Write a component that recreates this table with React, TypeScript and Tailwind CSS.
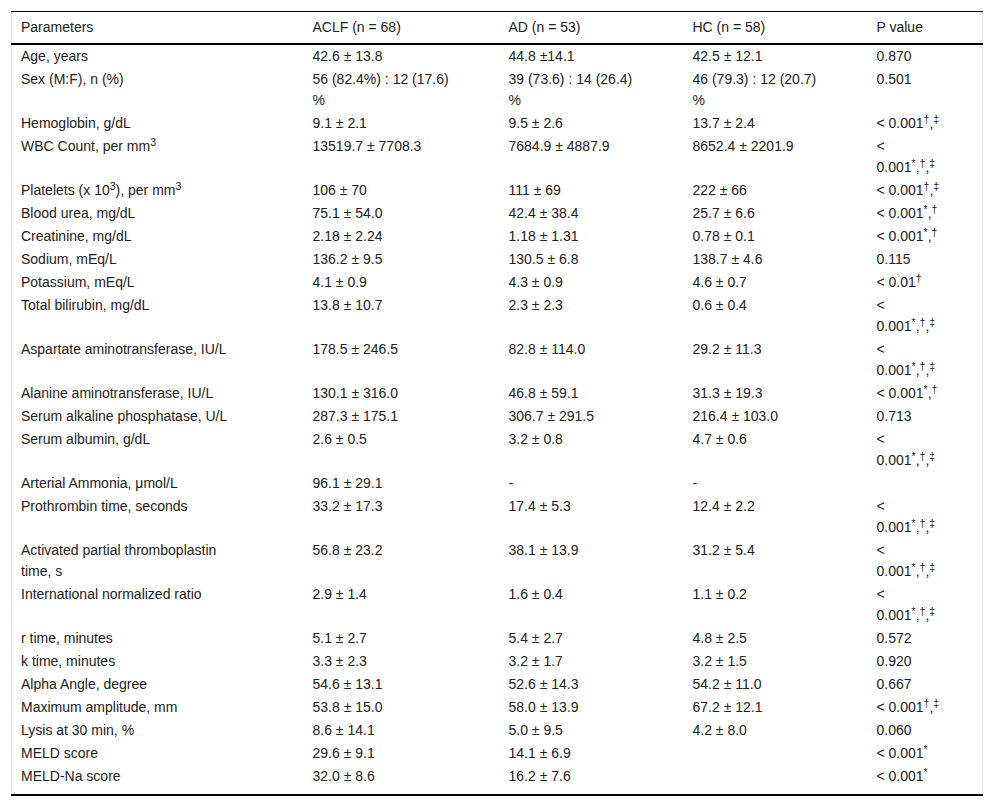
import React from "react";

type Row = {
  label: React.ReactNode;
  aclf: React.ReactNode;
  ad: React.ReactNode;
  hc: React.ReactNode;
  p: React.ReactNode;
};

// footnote marks: superscripts with baseline commas
const S = () => <sup>*</sup>;
const D = () => <sup>†</sup>;
const DD = () => <sup>‡</sup>;

const allThree = (
  <>
    &lt;
    <br />
    0.001<S />,<D />,<DD />
  </>
);

const rows: Row[] = [
  { label: "Age, years", aclf: "42.6 ± 13.8", ad: "44.8 ±14.1", hc: "42.5 ± 12.1", p: "0.870" },
  {
    label: "Sex (M:F), n (%)",
    aclf: (
      <>
        56 (82.4%) : 12 (17.6)
        <br />%
      </>
    ),
    ad: (
      <>
        39 (73.6) : 14 (26.4)
        <br />%
      </>
    ),
    hc: (
      <>
        46 (79.3) : 12 (20.7)
        <br />%
      </>
    ),
    p: "0.501",
  },
  {
    label: "Hemoglobin, g/dL",
    aclf: "9.1 ± 2.1",
    ad: "9.5 ± 2.6",
    hc: "13.7 ± 2.4",
    p: (
      <>
        &lt; 0.001<D />,<DD />
      </>
    ),
  },
  {
    label: (
      <>
        WBC Count, per mm<sup>3</sup>
      </>
    ),
    aclf: "13519.7 ± 7708.3",
    ad: "7684.9 ± 4887.9",
    hc: "8652.4 ± 2201.9",
    p: allThree,
  },
  {
    label: (
      <>
        Platelets (x 10<sup>3</sup>), per mm<sup>3</sup>
      </>
    ),
    aclf: "106 ± 70",
    ad: "111 ± 69",
    hc: "222 ± 66",
    p: (
      <>
        &lt; 0.001<D />,<DD />
      </>
    ),
  },
  {
    label: "Blood urea, mg/dL",
    aclf: "75.1 ± 54.0",
    ad: "42.4 ± 38.4",
    hc: "25.7 ± 6.6",
    p: (
      <>
        &lt; 0.001<S />,<D />
      </>
    ),
  },
  {
    label: "Creatinine, mg/dL",
    aclf: "2.18 ± 2.24",
    ad: "1.18 ± 1.31",
    hc: "0.78 ± 0.1",
    p: (
      <>
        &lt; 0.001<S />,<D />
      </>
    ),
  },
  { label: "Sodium, mEq/L", aclf: "136.2 ± 9.5", ad: "130.5 ± 6.8", hc: "138.7 ± 4.6", p: "0.115" },
  {
    label: "Potassium, mEq/L",
    aclf: "4.1 ± 0.9",
    ad: "4.3 ± 0.9",
    hc: "4.6 ± 0.7",
    p: (
      <>
        &lt; 0.01<D />
      </>
    ),
  },
  { label: "Total bilirubin, mg/dL", aclf: "13.8 ± 10.7", ad: "2.3 ± 2.3", hc: "0.6 ± 0.4", p: allThree },
  { label: "Aspartate aminotransferase, IU/L", aclf: "178.5 ± 246.5", ad: "82.8 ± 114.0", hc: "29.2 ± 11.3", p: allThree },
  {
    label: "Alanine aminotransferase, IU/L",
    aclf: "130.1 ± 316.0",
    ad: "46.8 ± 59.1",
    hc: "31.3 ± 19.3",
    p: (
      <>
        &lt; 0.001<S />,<D />
      </>
    ),
  },
  { label: "Serum alkaline phosphatase, U/L", aclf: "287.3 ± 175.1", ad: "306.7 ± 291.5", hc: "216.4 ± 103.0", p: "0.713" },
  { label: "Serum albumin, g/dL", aclf: "2.6 ± 0.5", ad: "3.2 ± 0.8", hc: "4.7 ± 0.6", p: allThree },
  { label: "Arterial Ammonia, μmol/L", aclf: "96.1 ± 29.1", ad: "-", hc: "-", p: "" },
  { label: "Prothrombin time, seconds", aclf: "33.2 ± 17.3", ad: "17.4 ± 5.3", hc: "12.4 ± 2.2", p: allThree },
  {
    label: (
      <>
        Activated partial thromboplastin
        <br />
        time, s
      </>
    ),
    aclf: "56.8 ± 23.2",
    ad: "38.1 ± 13.9",
    hc: "31.2 ± 5.4",
    p: allThree,
  },
  { label: "International normalized ratio", aclf: "2.9 ± 1.4", ad: "1.6 ± 0.4", hc: "1.1 ± 0.2", p: allThree },
  { label: "r time, minutes", aclf: "5.1 ± 2.7", ad: "5.4 ± 2.7", hc: "4.8 ± 2.5", p: "0.572" },
  { label: "k time, minutes", aclf: "3.3 ± 2.3", ad: "3.2 ± 1.7", hc: "3.2 ± 1.5", p: "0.920" },
  { label: "Alpha Angle, degree", aclf: "54.6 ± 13.1", ad: "52.6 ± 14.3", hc: "54.2 ± 11.0", p: "0.667" },
  {
    label: "Maximum amplitude, mm",
    aclf: "53.8 ± 15.0",
    ad: "58.0 ± 13.9",
    hc: "67.2 ± 12.1",
    p: (
      <>
        &lt; 0.001<D />,<DD />
      </>
    ),
  },
  { label: "Lysis at 30 min, %", aclf: "8.6 ± 14.1", ad: "5.0 ± 9.5", hc: "4.2 ± 8.0", p: "0.060" },
  {
    label: "MELD score",
    aclf: "29.6 ± 9.1",
    ad: "14.1 ± 6.9",
    hc: "",
    p: (
      <>
        &lt; 0.001<S />
      </>
    ),
  },
  {
    label: "MELD-Na score",
    aclf: "32.0 ± 8.6",
    ad: "16.2 ± 7.6",
    hc: "",
    p: (
      <>
        &lt; 0.001<S />
      </>
    ),
  },
];

export default function App() {
  return (
    <div className="min-h-[805px] w-[992px] bg-white pt-[11px] pl-[11px] font-['Liberation_Sans',Arial,sans-serif] text-[14px] leading-[21px] text-[#222]">
      <table className="w-[971px] table-fixed border-collapse border-x border-x-[#e6e6e6]">
        <colgroup>
          <col className="w-[292px]" />
          <col className="w-[196px]" />
          <col className="w-[184px]" />
          <col className="w-[184px]" />
          <col className="w-[115px]" />
        </colgroup>
        <thead>
          <tr className="border-t border-t-black border-b-2 border-b-black">
            {["Parameters", "ACLF (n = 68)", "AD (n = 53)", "HC (n = 58)", "P value"].map((h) => (
              <th key={h} className="pt-[5px] pb-[5px] pl-[9px] text-left align-top font-normal">
                {h}
              </th>
            ))}
          </tr>
        </thead>
        <tbody className="border-b-2 border-b-black">
          {rows.map((r, i) => {
            const last = i === rows.length - 1;
            const cell = last ? "pt-[1px] pb-[7px] pl-[9px] align-top" : "pt-[1px] pb-[1px] pl-[9px] align-top";
            return (
              <tr key={i}>
                <td className={cell}>{r.label}</td>
                <td className={cell}>{r.aclf}</td>
                <td className={cell}>{r.ad}</td>
                <td className={cell}>{r.hc}</td>
                <td className={cell}>{r.p}</td>
              </tr>
            );
          })}
        </tbody>
      </table>
    </div>
  );
}
